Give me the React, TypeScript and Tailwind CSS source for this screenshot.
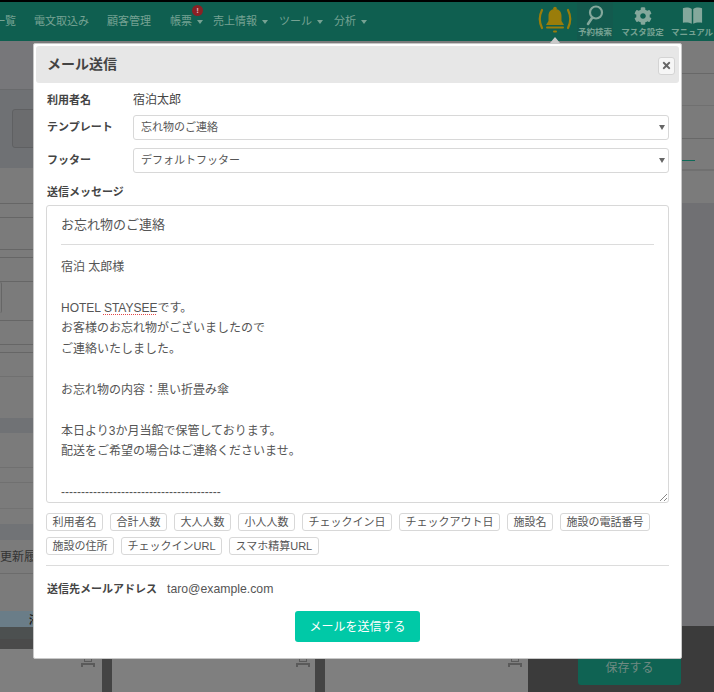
import { FaCog, FaTimes } from 'react-icons/fa';

const navItems = [
  { label: '電文取込み', width: 'w-[73px]' },
  { label: '顧客管理', width: 'w-[63px]' },
];

const menuItems = [
  { label: '売上情報', width: 'w-[66px]' },
  { label: 'ツール', width: 'w-[55px]' },
  { label: '分析', width: 'w-[40px]' },
];

const tagsFirst = ['利用者名', '合計人数', '大人人数', '小人人数', 'チェックイン日', 'チェックアウト日', '施設名', '施設の電話番号'];
const tagsSecond = ['施設の住所', 'チェックインURL', 'スマホ精算URL'];

function Caret({ className }: { className: string }) {
  return <span className={`inline-block h-0 w-0 border-x-[3px] border-t-[4px] border-x-transparent ${className}`} />;
}

function Printer() {
  return (
    <svg width="16" height="9" viewBox="0 0 16 9" fill="#5a5a5a">
      <path d="M4 0h8v4H4zM5 1v2h6V1z" fillRule="evenodd" />
      <path d="M1 5h14v4h-2V7H3v2H1z" />
    </svg>
  );
}

function TopIcon({ label, active, children }: { label: string; active?: boolean; children: React.ReactNode }) {
  return (
    <div className={`flex h-full flex-col items-center justify-start pt-[2px] ${active ? 'bg-[#135a4e]' : ''}`}>
      <div className="flex h-[23px] items-center">{children}</div>
      <div className="mt-[-1px] whitespace-nowrap text-[8.5px] font-bold leading-[12px] text-[#76a293]">{label}</div>
    </div>
  );
}

function TopNav() {
  return (
    <nav className="flex h-[39px] items-center overflow-hidden bg-[#0f5f50] text-[11px] text-[#76a293]">
      <div className="ml-[-6px] w-[40px] shrink-0">一覧</div>
      {navItems.map((item) => (
        <div key={item.label} className={`${item.width} shrink-0 whitespace-nowrap`}>{item.label}</div>
      ))}
      <div className="relative flex w-[43px] shrink-0 items-center gap-[5px]">
        帳票
        <Caret className="border-t-[#76a293]" />
        <span className="absolute left-[22px] top-[-8px] flex h-[11px] w-[11px] items-center justify-center rounded-full bg-[#8a2124] text-[8px] font-bold leading-none text-[#d9b7b7]">!</span>
      </div>
      {menuItems.map((item) => (
        <div key={item.label} className={`${item.width} flex shrink-0 items-center gap-[5px] whitespace-nowrap`}>
          {item.label}
          <Caret className="border-t-[#76a293]" />
        </div>
      ))}
      <div className="ml-[163px] flex h-full w-[36px] shrink-0 items-center justify-center">
        <svg width="36" height="32" viewBox="0 0 36 32" fill="none" className="mt-[-4px]">
          <path d="M18 5c-4.500 0-6.500 3-6.500 7v5l-2.500 4h18l-2.500-4v-5c0-4-2-7-6.500-7z" fill="#9a7d0a" />
          <circle cx="18" cy="4.500" r="1.800" fill="#9a7d0a" />
          <rect x="9" y="22.500" width="18" height="2" rx="1" fill="#9a7d0a" />
          <rect x="16" y="26.500" width="4" height="2" rx="1" fill="#9a7d0a" />
          <path d="M5 6c-3 6-3 12 0 18M31 6c3 6 3 12 0 18" stroke="#9a7d0a" strokeWidth="2.200" strokeLinecap="round" />
        </svg>
      </div>
      <div className="ml-[4px] h-full w-[36px] shrink-0">
        <TopIcon label="予約検索" active>
          <svg width="18" height="21" viewBox="0 0 18 21" fill="none">
            <circle cx="10" cy="7.500" r="6" stroke="#84a89c" strokeWidth="2.200" />
            <path d="M6 13l-4 6" stroke="#84a89c" strokeWidth="2.600" strokeLinecap="round" />
          </svg>
        </TopIcon>
      </div>
      <div className="ml-[8.5px] h-full w-[42px] shrink-0">
        <TopIcon label="マスタ設定">
          <FaCog className="h-[18px] w-[18px] text-[#84a89c]" />
        </TopIcon>
      </div>
      <div className="ml-[7.5px] h-full w-[42px] shrink-0">
        <TopIcon label="マニュアル">
          <svg width="21" height="17" viewBox="0 0 23 18" fill="#84a89c">
            <path d="M1 1c3-1 7-1 9.700 1v16C8 16.500 4 16.500 1 17z" />
            <path d="M22 1c-3-1-7-1-9.700 1v16c2.700-1.500 6.700-1.500 9.700-1z" />
          </svg>
        </TopIcon>
      </div>
    </nav>
  );
}

function LeftColumn() {
  return (
    <div className="flex w-[33px] shrink-0 flex-col overflow-hidden bg-[#7b7b7b]">
      <div className="h-[49px] border-b border-[#696a6c] bg-[#77777a]" />
      <div className="h-[78px] bg-[#6f7174] pl-[12px] pt-[19px]">
        <div className="h-[39px] w-[30px] rounded-[3px] border border-[#5f6062] bg-[#6b6c6e]" />
      </div>
      <div className="h-[36px] border-b border-[#666]" />
      <div className="h-[14px] border-b border-[#666]" />
      <div className="h-[32px] border-b border-[#666]" />
      <div className="h-[8px] border-b border-[#666]" />
      <div className="h-[24px] border-b border-[#666]" />
      <div className="h-[39px] border-b border-[#666]">
        <div className="h-[31px] w-[2px] rounded-r-[2px] border-r border-[#666]" />
      </div>
      <div className="h-[24px] border-b border-[#666]" />
      <div className="h-[8px] border-b border-[#666]" />
      <div className="h-[24px] border-b border-[#707070]" />
      <div className="h-[41px]" />
      <div className="h-[15px] bg-[#707275]" />
      <div className="h-[35px] border-b border-[#707070]" />
      <div className="h-[15px] border-b border-[#707070]" />
      <div className="h-[26px] border-b border-[#727272]" />
      <div className="h-[15px]" />
      <div className="h-[16px] bg-[#717376]" />
      <div className="flex h-[34px] items-end whitespace-nowrap border-b border-[#6c6c6c] pb-[7px] text-[12px] leading-[18px] text-[#333]">更新履</div>
      <div className="h-[37px]" />
      <div className="flex h-[16px] items-end justify-end bg-[#6a7d88]">
        <span className="mr-[-7px] text-[11px] font-bold leading-[14px] text-[#222]">滞</span>
      </div>
      <div className="h-[12px] bg-[#4c5050]" />
      <div className="h-[10px] bg-[#4a4a4a]" />
      <div className="flex-1 bg-[#7f7f7f]" />
    </div>
  );
}

function CenterColumn() {
  return (
    <div className="flex flex-1 flex-col justify-end">
      <div className="flex h-[52px] bg-[#7f7f7f]">
        <div className="flex w-[69px] items-end justify-end pb-[25px] pr-[6px]"><Printer /></div>
        <div className="w-[10px] bg-[#444]" />
        <div className="flex w-[203px] items-end justify-end pb-[25px] pr-[4px]"><Printer /></div>
        <div className="w-[10px] bg-[#444]" />
        <div className="flex w-[203px] items-end justify-end pb-[25px] pr-[5px]"><Printer /></div>
        <div className="flex-1 bg-[#3b3b3b] pl-[50px] pt-[10px]">
          <div className="flex h-[35px] w-[103px] items-center justify-center rounded-[3px] bg-[#0f6353] text-[12px] text-[#6f8a82]">保存する</div>
        </div>
      </div>
    </div>
  );
}

function RightColumn() {
  return (
    <div className="flex w-[32px] shrink-0 flex-col bg-[#7b7b7b]">
      <div className="h-[33px] border-b border-[#686868]" />
      <div className="h-[32px] border-b border-[#707070]" />
      <div className="h-[33px] border-b border-[#686868]" />
      <div className="h-[32px] border-b-2 border-[#707070]">
        <div className="mt-[21px] h-[1px] w-[13px] bg-[#0f6a58]" />
      </div>
      <div className="h-[32px]" />
      <div className="flex-1 bg-[#707073]" />
      <div className="h-[66px] bg-[#3b3b3b]" />
    </div>
  );
}

function SelectBox({ value }: { value: string }) {
  return (
    <div className="flex h-[25px] flex-1 items-center justify-between rounded-[3px] border border-[#d8d8d8] pl-[7px] pr-[3px] text-[11px] text-[#555]">
      {value}
      <span className="inline-block h-0 w-0 border-x-[3.5px] border-t-[5px] border-x-transparent border-t-[#666]" />
    </div>
  );
}

function Tag({ label }: { label: string }) {
  return (
    <span className="flex h-[18px] items-center whitespace-nowrap rounded-[3px] border border-[#d8d8d8] px-[5.5px] text-[11px] text-[#555]">{label}</span>
  );
}

function MailModal() {
  return (
    <div className="absolute left-[33px] top-[43px] h-[616px] w-[649px] rounded-[2px] border border-[#c8c8c8] bg-white text-[#444]">
      <div className="m-[2px] flex h-[37px] items-center justify-between rounded-[3px] bg-[#e7e7e7] pl-[11px] pr-[4px]">
        <h2 className="text-[14px] font-bold text-[#444]">メール送信</h2>
        <button className="mt-[2px] flex h-[18px] w-[17px] items-center justify-center rounded-[3px] border border-[#d4d4d4] bg-[#f6f6f6] text-[#666]">
          <FaTimes className="h-[11px] w-[11px]" />
        </button>
      </div>

      <div className="px-[12px]">
        <div className="mt-[7px] flex h-[20px] items-center">
          <div className="w-[87px] pl-[1px] text-[11px] font-bold">利用者名</div>
          <div className="text-[12px]">宿泊太郎</div>
        </div>
        <div className="mt-[5px] flex items-center">
          <div className="w-[87px] pl-[1px] text-[11px] font-bold">テンプレート</div>
          <SelectBox value="忘れ物のご連絡" />
        </div>
        <div className="mt-[8px] flex items-center">
          <div className="w-[87px] pl-[1px] text-[11px] font-bold">フッター</div>
          <SelectBox value="デフォルトフッター" />
        </div>

        <div className="mt-[11px] h-[16px] pl-[1px] text-[11px] font-bold leading-[16px]">送信メッセージ</div>

        <div className="relative mt-[5px] h-[298px] overflow-hidden rounded-[3px] border border-[#d8d8d8] px-[14px] text-[12px] leading-[20.5px] text-[#555]">
          <div className="border-b border-[#dcdcdc] pb-[8px] pt-[9px] text-[13px]">お忘れ物のご連絡</div>
          <div className="mt-[12px]">宿泊 太郎様</div>
          <div>&nbsp;</div>
          <div>
            HOTEL <span className="underline decoration-[#e04848] decoration-dotted underline-offset-2">STAYSEE</span>です。
          </div>
          <div>お客様のお忘れ物がございましたので</div>
          <div>ご連絡いたしました。</div>
          <div>&nbsp;</div>
          <div>お忘れ物の内容：黒い折畳み傘</div>
          <div>&nbsp;</div>
          <div>本日より3か月当館で保管しております。</div>
          <div>配送をご希望の場合はご連絡くださいませ。</div>
          <div>&nbsp;</div>
          <div>----------------------------------------</div>
          <svg width="8" height="8" viewBox="0 0 8 8" className="absolute bottom-[1px] right-[1px]" stroke="#888" strokeWidth="1">
            <path d="M1 8l7-7M5 8l3-3" />
          </svg>
        </div>

        <div className="mt-[10px] flex gap-[7px]">
          {tagsFirst.map((tag) => <Tag key={tag} label={tag} />)}
        </div>
        <div className="mt-[6px] flex gap-[7px]">
          {tagsSecond.map((tag) => <Tag key={tag} label={tag} />)}
        </div>

        <div className="mt-[10px] h-[1px] bg-[#dcdcdc]" />

        <div className="mt-[15px] flex h-[16px] items-center pl-[1px]">
          <div className="text-[11px] font-bold">送信先メールアドレス</div>
          <div className="ml-[10px] text-[12.25px] text-[#555]">taro@example.com</div>
        </div>

        <div className="mt-[14px] flex justify-center">
          <button className="h-[31px] w-[125px] rounded-[3px] bg-[#00c9a7] text-[12px] text-white">メールを送信する</button>
        </div>
      </div>
    </div>
  );
}

export default function App() {
  return (
    <div
      className="relative flex h-[692px] w-[714px] flex-col overflow-hidden bg-[#7b7b7b]"
      style={{ fontFamily: '"Liberation Sans", "Noto Sans CJK JP", sans-serif' }}
    >
      <div className="h-[2px] bg-black" />
      <TopNav />
      <div className="flex flex-1">
        <LeftColumn />
        <CenterColumn />
        <RightColumn />
      </div>
      <div className="absolute left-[550px] top-[37px] h-0 w-0 border-x-[5px] border-b-[6px] border-x-transparent border-b-[#c9c9c9]" />
      <MailModal />
    </div>
  );
}
